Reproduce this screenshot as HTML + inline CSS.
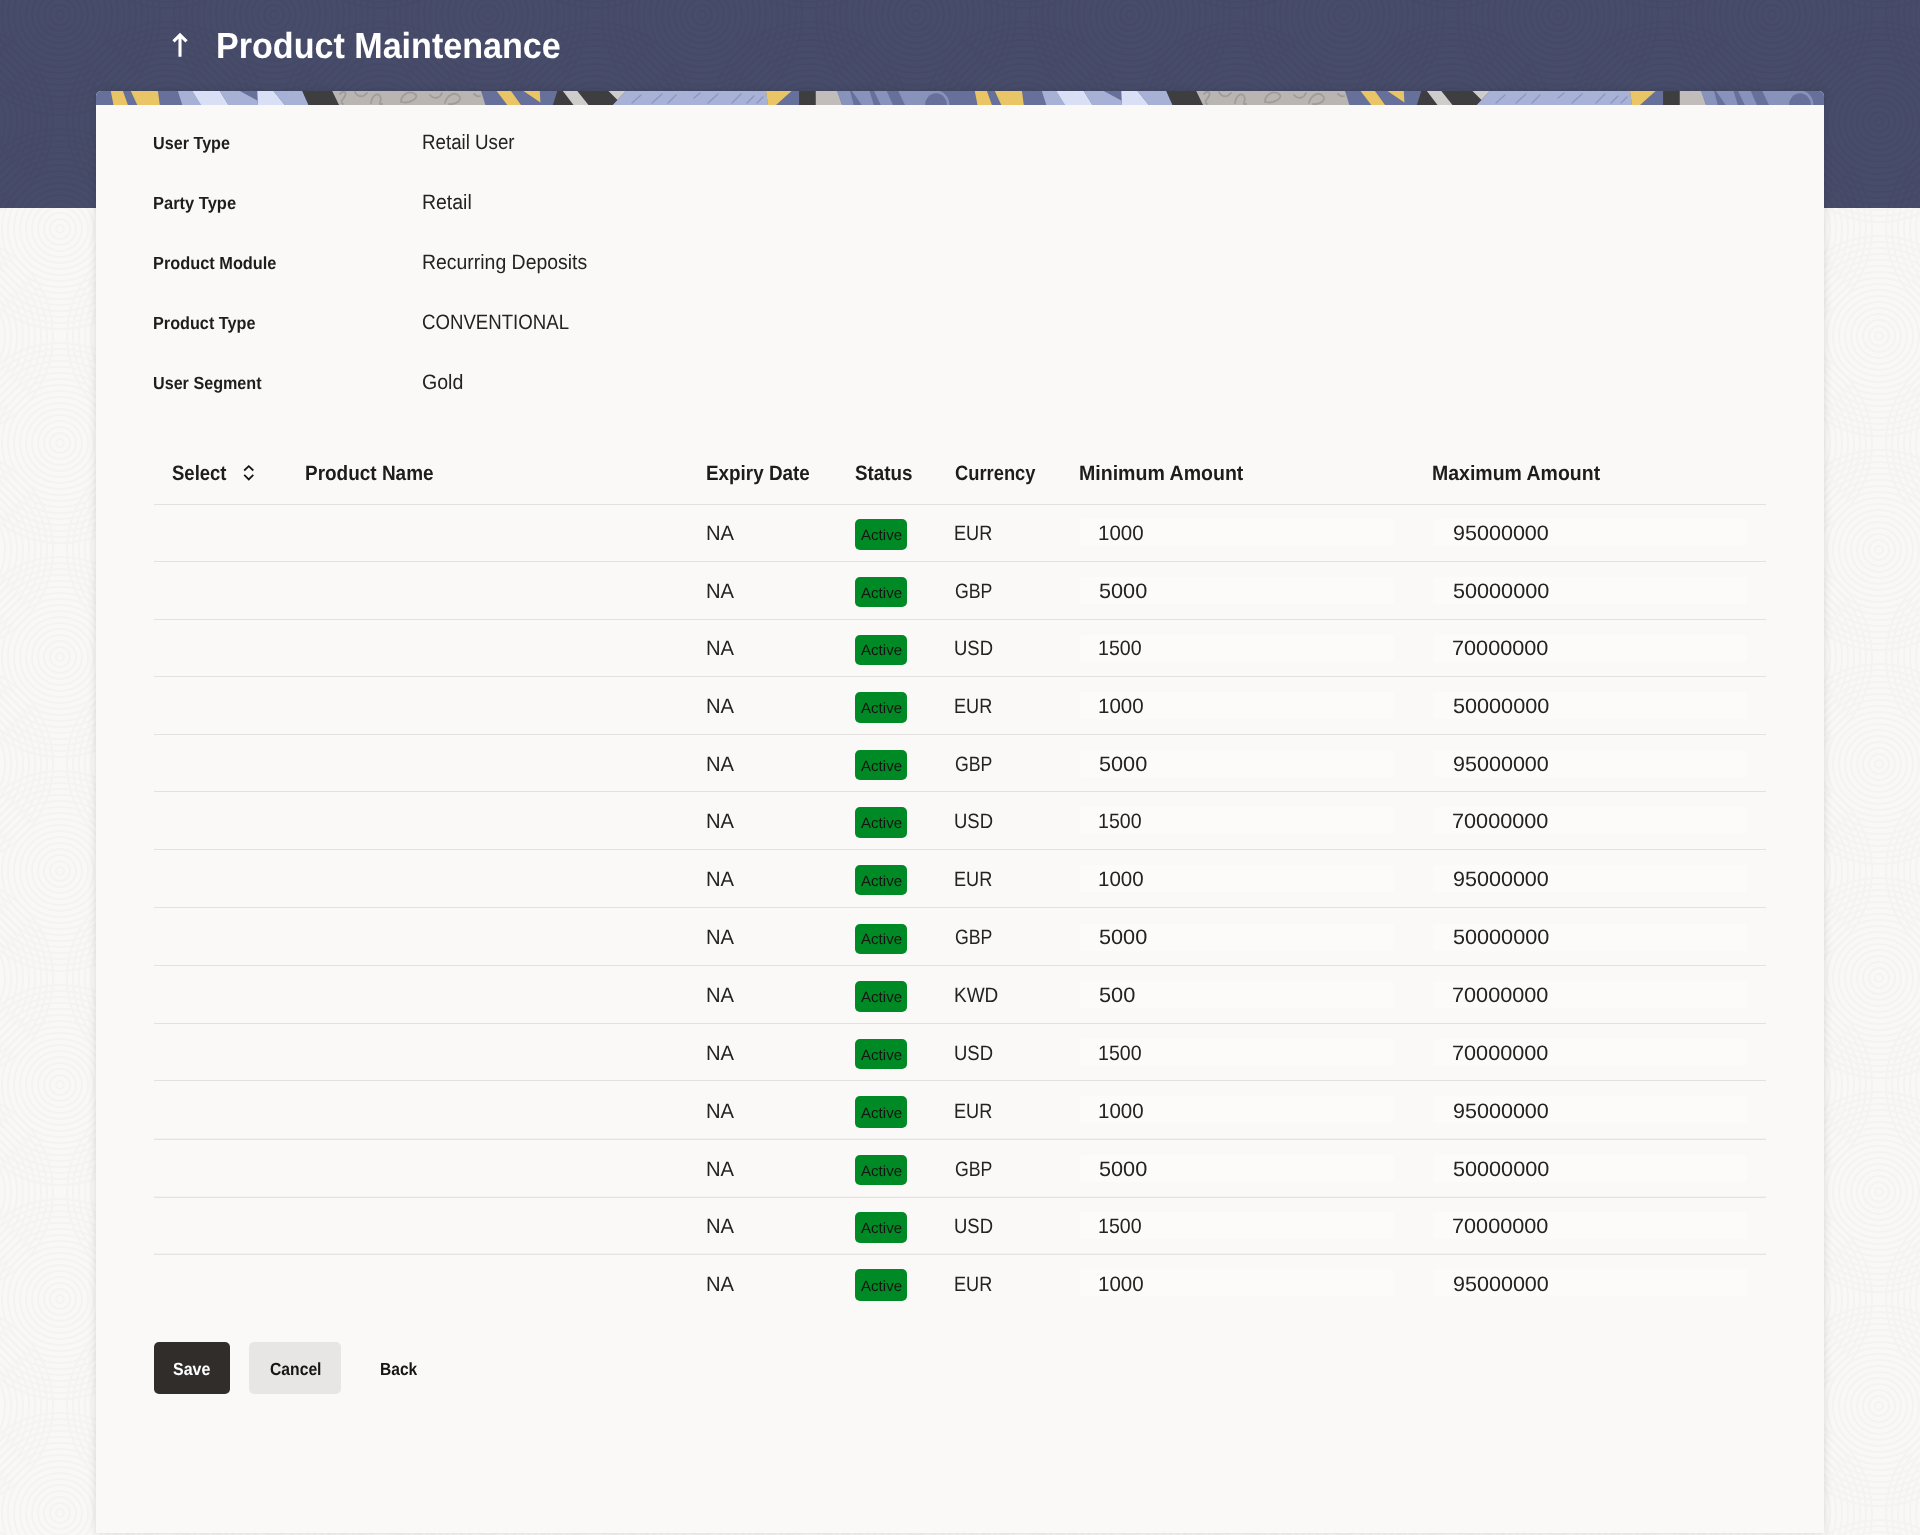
<!DOCTYPE html>
<html lang="en">
<head>
<meta charset="utf-8">
<title>Product Maintenance</title>
<style>
*{box-sizing:border-box;margin:0;padding:0}
html,body{width:1920px;height:1535px;overflow:hidden}
body{position:relative;background:#f9f8f7;font-family:"Liberation Sans",sans-serif;color:#161513}
.hdr{position:absolute;left:0;top:0;width:1920px;height:208px;background:#474c6a;overflow:hidden}
.hdr,.card{will-change:transform}
.arrow{position:absolute;left:170px;top:32px}
.card{position:absolute;left:96px;top:91px;width:1728px;height:1442px;background:#faf9f7;border-radius:5px 5px 0 0;box-shadow:0 0 8px rgba(0,0,0,.13);overflow:hidden}
.strip{position:absolute;left:0;top:0;width:1728px;height:14px;display:block}
.t{text-rendering:geometricPrecision;position:absolute;display:block;white-space:nowrap;line-height:1;transform-origin:0 0}
.title,.w{color:#fff}
.sort{position:absolute}
.ln{position:absolute;left:58px;width:1612px;height:1px;background:#e4e2df}
.ln2{position:absolute;left:58px;width:1612px;height:2px;background:linear-gradient(#f2f1ef 0,#f2f1ef 1px,#e6e4e2 1px,#e6e4e2 2px)}
.badge{position:absolute;left:759px;width:52px;height:31px;border-radius:5px;background:#008a26}
.box{position:absolute;width:314px;height:27px;border-radius:4px;background:#fcfbfa}
.mn{left:984px}
.mx{left:1337px}
.btn{position:absolute;top:1251px;height:52px;border-radius:5px}
.save{left:58px;width:76px;background:#312d2a}
.cancel{left:153px;width:92px;background:#e8e6e4}
.tex{position:absolute;left:0;top:0;display:block}
.val,.td{color:#242321}
.lbl,.th{color:#1e1d1b}
.title{font-size:36.3px;font-weight:bold}
.lbl{font-size:17.6px;font-weight:bold}
.val{font-size:20.8px;font-weight:normal}
.th{font-size:20.8px;font-weight:bold}
.td{font-size:20.8px;font-weight:normal}
.bg{font-size:15.0px;font-weight:normal}
.bt{font-size:17.6px;font-weight:bold}
</style>
</head>
<body>
<div class="hdr">
  <svg class="tex" width="1920" height="208" viewBox="0 0 1920 208"><defs><pattern id="fp" width="214" height="214" patternUnits="userSpaceOnUse" patternTransform="translate(-47 122)"><g fill="none" stroke="#000" stroke-width="2"><circle cx="107" cy="107" r="4"/><circle cx="107" cy="107" r="10"/><circle cx="107" cy="107" r="16"/><circle cx="107" cy="107" r="22"/><circle cx="107" cy="107" r="28"/><circle cx="107" cy="107" r="34"/><circle cx="107" cy="107" r="40"/><circle cx="107" cy="107" r="46"/><circle cx="107" cy="107" r="52"/><circle cx="107" cy="107" r="58"/><circle cx="107" cy="107" r="64"/><circle cx="107" cy="107" r="70"/><circle cx="107" cy="107" r="76"/><circle cx="107" cy="107" r="82"/><circle cx="107" cy="107" r="88"/><circle cx="107" cy="107" r="94"/><circle cx="107" cy="107" r="100"/><circle cx="0" cy="0" r="4"/><circle cx="0" cy="0" r="10"/><circle cx="0" cy="0" r="16"/><circle cx="0" cy="0" r="22"/><circle cx="0" cy="0" r="28"/><circle cx="0" cy="0" r="34"/><circle cx="0" cy="0" r="40"/><circle cx="0" cy="0" r="46"/><circle cx="0" cy="0" r="52"/><circle cx="0" cy="0" r="58"/><circle cx="0" cy="0" r="64"/><circle cx="0" cy="0" r="70"/><circle cx="0" cy="0" r="76"/><circle cx="0" cy="0" r="82"/><circle cx="0" cy="0" r="88"/><circle cx="0" cy="0" r="94"/><circle cx="0" cy="0" r="100"/><circle cx="214" cy="0" r="4"/><circle cx="214" cy="0" r="10"/><circle cx="214" cy="0" r="16"/><circle cx="214" cy="0" r="22"/><circle cx="214" cy="0" r="28"/><circle cx="214" cy="0" r="34"/><circle cx="214" cy="0" r="40"/><circle cx="214" cy="0" r="46"/><circle cx="214" cy="0" r="52"/><circle cx="214" cy="0" r="58"/><circle cx="214" cy="0" r="64"/><circle cx="214" cy="0" r="70"/><circle cx="214" cy="0" r="76"/><circle cx="214" cy="0" r="82"/><circle cx="214" cy="0" r="88"/><circle cx="214" cy="0" r="94"/><circle cx="214" cy="0" r="100"/><circle cx="0" cy="214" r="4"/><circle cx="0" cy="214" r="10"/><circle cx="0" cy="214" r="16"/><circle cx="0" cy="214" r="22"/><circle cx="0" cy="214" r="28"/><circle cx="0" cy="214" r="34"/><circle cx="0" cy="214" r="40"/><circle cx="0" cy="214" r="46"/><circle cx="0" cy="214" r="52"/><circle cx="0" cy="214" r="58"/><circle cx="0" cy="214" r="64"/><circle cx="0" cy="214" r="70"/><circle cx="0" cy="214" r="76"/><circle cx="0" cy="214" r="82"/><circle cx="0" cy="214" r="88"/><circle cx="0" cy="214" r="94"/><circle cx="0" cy="214" r="100"/><circle cx="214" cy="214" r="4"/><circle cx="214" cy="214" r="10"/><circle cx="214" cy="214" r="16"/><circle cx="214" cy="214" r="22"/><circle cx="214" cy="214" r="28"/><circle cx="214" cy="214" r="34"/><circle cx="214" cy="214" r="40"/><circle cx="214" cy="214" r="46"/><circle cx="214" cy="214" r="52"/><circle cx="214" cy="214" r="58"/><circle cx="214" cy="214" r="64"/><circle cx="214" cy="214" r="70"/><circle cx="214" cy="214" r="76"/><circle cx="214" cy="214" r="82"/><circle cx="214" cy="214" r="88"/><circle cx="214" cy="214" r="94"/><circle cx="214" cy="214" r="100"/></g></pattern></defs><rect width="1920" height="208" fill="url(#fp)" opacity=".035"/></svg>
  <svg class="arrow" width="20" height="28" viewBox="0 0 20 28"><path d="M10 24.8V2.4M3.5 9.4 10 2.9l6.5 6.5" fill="none" stroke="#fff" stroke-width="3.1"/></svg>
  <span class="t title" style="left:216.37px;top:28.15px;transform:scaleX(0.9391)">Product Maintenance</span>
</div>
<svg class="tex" style="top:208px" width="1920" height="1327" viewBox="0 208 1920 1327"><rect y="208" width="1920" height="1327" fill="url(#fp)" opacity=".02"/></svg>
<div class="card">
  <svg class="strip" width="1728" height="14" viewBox="0 0 1728 14">
    <defs>
      <g id="tile">
        <rect x="0" y="0" width="864" height="14" fill="#66709a"/>
        <polygon points="14.8,0 26.9,0 31.9,14 17.5,14" fill="#e9c566"/>
        <polygon points="34.8,0 61.9,0 63.8,14 41.3,14" fill="#e9c566"/>
        <polygon points="81.9,0 96.3,0 105,14 86.3,14" fill="#a6b1d5"/>
        <polygon points="96.3,0 123.8,0 132.5,14 105,14" fill="#d9dff5"/>
        <polygon points="123.8,0 143.8,0 161.3,9.5 161.9,14 132.5,14" fill="#a6b1d5"/>
        <polygon points="161.3,0 177.5,0 188.8,14 161.9,14" fill="#d9dff5"/>
        <polygon points="177.5,0 206.3,0 212.5,14 188.8,14" fill="#a6b1d5"/>
        <polygon points="206.3,0 236.3,0 243.1,14 212.5,14" fill="#3e3e40"/>
        <polygon points="236.3,0 385,0 389.4,14 243.1,14" fill="#b9b5b2"/>
        <path d="M244,3c3,-4 7,-2 5,2s-6,6 -2,8M259,1c2,5 8,6 12,1M275,12c1,-7 6,-11 9,-7s-3,9 2,8M305,11c0,-8 9,-12 14,-8s-6,10 -13,8M334,4c4,5 10,3 12,-2M349,12c2,-8 10,-12 14,-7s-5,9 -10,8M378,3c2,2 4,3 6,2" fill="none" stroke="#a09c99" stroke-width="1.8" stroke-linecap="round"/>
        <polygon points="400.6,0 415,0 425,14 411.3,14" fill="#e9c566"/>
        <polygon points="427.5,0 443.8,0 444.4,11.5" fill="#e9c566"/>
        <polygon points="461.3,0 530,0 516.9,14 456.9,14" fill="#3e3e40"/>
        <polygon points="466.9,0 481.3,0 492.5,14 477.5,14" fill="#cfcdcb"/>
        <polygon points="512.5,0 526.3,0 530,0 521.5,9 " fill="#cfcdcb"/>
        <polygon points="530,0 670,0 672,14 516.9,14" fill="#a7b2d6"/>
        <path d="M545,4l-9,8M566,3l-10,9M580,4l-8,8M604,2l-6,5M622,3l-10,9M645,3l-9,9M658,5l-7,7M667,6l-6,6" stroke="#8c98c2" stroke-width="1.5" stroke-linecap="round"/>
        <polygon points="670,0 695.6,0 680,14 672,14" fill="#e9c566"/>
        <rect x="703.1" y="0" width="16.7" height="14" fill="#3e3e40"/>
        <polygon points="719.8,0 741.2,0 746,14 719.8,14" fill="#c1bdba"/>
        <polygon points="741.2,0 754,0 757.8,14 746,14" fill="#8893bb"/>
        <polygon points="756,0 773.6,0 777.8,14 765.7,14" fill="#8893bb"/>
        <polygon points="778,0 790.7,0 797,14 784.8,14" fill="#8893bb"/>
        <polygon points="802.3,0 840,0 840,14 809,14" fill="#8893bb"/>
        <ellipse cx="840" cy="14" rx="13.5" ry="14.6" fill="#8893bb"/>
        <ellipse cx="840" cy="14.5" rx="11" ry="12.3" fill="#66709a"/>
      </g>
    </defs>
    <use href="#tile"/>
    <use href="#tile" x="864"/>
  </svg>

  <span class="t lbl" style="left:57.28px;top:44.04px;transform:scaleX(0.9191)">User Type</span><span class="t val" style="left:326.37px;top:42.32px;transform:scaleX(0.9001)">Retail User</span>
  <span class="t lbl" style="left:56.50px;top:104.04px;transform:scaleX(0.9376)">Party Type</span><span class="t val" style="left:326.21px;top:102.32px;transform:scaleX(0.9351)">Retail</span>
  <span class="t lbl" style="left:56.54px;top:164.04px;transform:scaleX(0.9288)">Product Module</span><span class="t val" style="left:326.23px;top:162.32px;transform:scaleX(0.9342)">Recurring Deposits</span>
  <span class="t lbl" style="left:56.60px;top:224.04px;transform:scaleX(0.9223)">Product Type</span><span class="t val" style="left:325.79px;top:222.32px;transform:scaleX(0.8959)">CONVENTIONAL</span>
  <span class="t lbl" style="left:57.30px;top:284.04px;transform:scaleX(0.9176)">User Segment</span><span class="t val" style="left:325.79px;top:282.32px;transform:scaleX(0.9414)">Gold</span>
  <!-- table header -->
  <span class="t th" style="left:76.42px;top:373.32px;transform:scaleX(0.8897)">Select</span>
  <span class="t th" style="left:209.26px;top:373.32px;transform:scaleX(0.9120)">Product Name</span>
  <span class="t th" style="left:609.67px;top:373.32px;transform:scaleX(0.9076)">Expiry Date</span>
  <span class="t th" style="left:759.42px;top:373.32px;transform:scaleX(0.9053)">Status</span>
  <span class="t th" style="left:858.85px;top:373.32px;transform:scaleX(0.8812)">Currency</span>
  <span class="t th" style="left:983.39px;top:373.32px;transform:scaleX(0.9401)">Minimum Amount</span>
  <span class="t th" style="left:1335.54px;top:373.32px;transform:scaleX(0.9368)">Maximum Amount</span>
  <svg class="sort" style="left:145px;top:372px" width="16" height="20" viewBox="0 0 16 20"><path d="M3.2 7.5 7.75 3.1 12.3 7.5M3.2 11.8l4.55 4.6L12.3 11.8" fill="none" stroke="#161513" stroke-width="1.75"/></svg>
  <!-- table rows -->
  <div class="ln" style="top:413px"></div><div class="badge" style="top:428px;height:31px"></div><div class="box mn" style="top:428px"></div><div class="box mx" style="top:428px"></div><span class="t td" style="left:609.66px;top:433.32px;transform:scaleX(0.9717)">NA</span><span class="t bg" style="left:765.48px;top:437.25px;transform:scaleX(1.0050)">Active</span><span class="t td" style="left:857.65px;top:433.32px;transform:scaleX(0.8707)">EUR</span><span class="t td" style="left:1001.90px;top:433.32px;transform:scaleX(0.9850)">1000</span><span class="t td" style="left:1357.45px;top:433.32px;transform:scaleX(1.0357)">95000000</span>
  <div class="ln" style="top:470px"></div><div class="badge" style="top:486px;height:30px"></div><div class="box mn" style="top:486px"></div><div class="box mx" style="top:486px"></div><span class="t td" style="left:609.66px;top:491.32px;transform:scaleX(0.9717)">NA</span><span class="t bg" style="left:765.48px;top:495.25px;transform:scaleX(1.0050)">Active</span><span class="t td" style="left:858.74px;top:491.32px;transform:scaleX(0.8515)">GBP</span><span class="t td" style="left:1003.03px;top:491.32px;transform:scaleX(1.0427)">5000</span><span class="t td" style="left:1356.70px;top:491.32px;transform:scaleX(1.0398)">50000000</span>
  <div class="ln" style="top:528px"></div><div class="badge" style="top:544px;height:30px"></div><div class="box mn" style="top:544px"></div><div class="box mx" style="top:544px"></div><span class="t td" style="left:609.66px;top:548.32px;transform:scaleX(0.9717)">NA</span><span class="t bg" style="left:765.48px;top:552.25px;transform:scaleX(1.0050)">Active</span><span class="t td" style="left:858.04px;top:548.32px;transform:scaleX(0.8873)">USD</span><span class="t td" style="left:1002.30px;top:548.32px;transform:scaleX(0.9412)">1500</span><span class="t td" style="left:1355.71px;top:548.32px;transform:scaleX(1.0412)">70000000</span>
  <div class="ln" style="top:585px"></div><div class="badge" style="top:601px;height:31px"></div><div class="box mn" style="top:601px"></div><div class="box mx" style="top:601px"></div><span class="t td" style="left:609.66px;top:606.32px;transform:scaleX(0.9717)">NA</span><span class="t bg" style="left:765.48px;top:610.25px;transform:scaleX(1.0050)">Active</span><span class="t td" style="left:857.65px;top:606.32px;transform:scaleX(0.8707)">EUR</span><span class="t td" style="left:1001.90px;top:606.32px;transform:scaleX(0.9850)">1000</span><span class="t td" style="left:1356.70px;top:606.32px;transform:scaleX(1.0398)">50000000</span>
  <div class="ln" style="top:643px"></div><div class="badge" style="top:659px;height:30px"></div><div class="box mn" style="top:659px"></div><div class="box mx" style="top:659px"></div><span class="t td" style="left:609.66px;top:664.32px;transform:scaleX(0.9717)">NA</span><span class="t bg" style="left:765.48px;top:668.25px;transform:scaleX(1.0050)">Active</span><span class="t td" style="left:858.74px;top:664.32px;transform:scaleX(0.8515)">GBP</span><span class="t td" style="left:1003.03px;top:664.32px;transform:scaleX(1.0427)">5000</span><span class="t td" style="left:1357.45px;top:664.32px;transform:scaleX(1.0357)">95000000</span>
  <div class="ln" style="top:700px"></div><div class="badge" style="top:716px;height:31px"></div><div class="box mn" style="top:716px"></div><div class="box mx" style="top:716px"></div><span class="t td" style="left:609.66px;top:721.32px;transform:scaleX(0.9717)">NA</span><span class="t bg" style="left:765.48px;top:725.25px;transform:scaleX(1.0050)">Active</span><span class="t td" style="left:858.04px;top:721.32px;transform:scaleX(0.8873)">USD</span><span class="t td" style="left:1002.30px;top:721.32px;transform:scaleX(0.9412)">1500</span><span class="t td" style="left:1355.71px;top:721.32px;transform:scaleX(1.0412)">70000000</span>
  <div class="ln" style="top:758px"></div><div class="badge" style="top:774px;height:30px"></div><div class="box mn" style="top:774px"></div><div class="box mx" style="top:774px"></div><span class="t td" style="left:609.66px;top:779.32px;transform:scaleX(0.9717)">NA</span><span class="t bg" style="left:765.48px;top:783.25px;transform:scaleX(1.0050)">Active</span><span class="t td" style="left:857.65px;top:779.32px;transform:scaleX(0.8707)">EUR</span><span class="t td" style="left:1001.90px;top:779.32px;transform:scaleX(0.9850)">1000</span><span class="t td" style="left:1357.45px;top:779.32px;transform:scaleX(1.0357)">95000000</span>
  <div class="ln" style="top:816px"></div><div class="badge" style="top:833px;height:30px"></div><div class="box mn" style="top:833px"></div><div class="box mx" style="top:833px"></div><span class="t td" style="left:609.66px;top:837.32px;transform:scaleX(0.9717)">NA</span><span class="t bg" style="left:765.48px;top:841.25px;transform:scaleX(1.0050)">Active</span><span class="t td" style="left:858.74px;top:837.32px;transform:scaleX(0.8515)">GBP</span><span class="t td" style="left:1003.03px;top:837.32px;transform:scaleX(1.0427)">5000</span><span class="t td" style="left:1356.70px;top:837.32px;transform:scaleX(1.0398)">50000000</span>
  <div class="ln" style="top:874px"></div><div class="badge" style="top:890px;height:31px"></div><div class="box mn" style="top:890px"></div><div class="box mx" style="top:890px"></div><span class="t td" style="left:609.66px;top:895.32px;transform:scaleX(0.9717)">NA</span><span class="t bg" style="left:765.48px;top:899.25px;transform:scaleX(1.0050)">Active</span><span class="t td" style="left:858.25px;top:895.32px;transform:scaleX(0.9118)">KWD</span><span class="t td" style="left:1002.93px;top:895.32px;transform:scaleX(1.0476)">500</span><span class="t td" style="left:1355.71px;top:895.32px;transform:scaleX(1.0412)">70000000</span>
  <div class="ln" style="top:932px"></div><div class="badge" style="top:948px;height:30px"></div><div class="box mn" style="top:948px"></div><div class="box mx" style="top:948px"></div><span class="t td" style="left:609.66px;top:953.32px;transform:scaleX(0.9717)">NA</span><span class="t bg" style="left:765.48px;top:957.25px;transform:scaleX(1.0050)">Active</span><span class="t td" style="left:858.04px;top:953.32px;transform:scaleX(0.8873)">USD</span><span class="t td" style="left:1002.30px;top:953.32px;transform:scaleX(0.9412)">1500</span><span class="t td" style="left:1355.71px;top:953.32px;transform:scaleX(1.0412)">70000000</span>
  <div class="ln" style="top:989px"></div><div class="badge" style="top:1005px;height:32px"></div><div class="box mn" style="top:1005px"></div><div class="box mx" style="top:1005px"></div><span class="t td" style="left:609.66px;top:1011.32px;transform:scaleX(0.9717)">NA</span><span class="t bg" style="left:765.48px;top:1015.25px;transform:scaleX(1.0050)">Active</span><span class="t td" style="left:857.65px;top:1011.32px;transform:scaleX(0.8707)">EUR</span><span class="t td" style="left:1001.90px;top:1011.32px;transform:scaleX(0.9850)">1000</span><span class="t td" style="left:1357.45px;top:1011.32px;transform:scaleX(1.0357)">95000000</span>
  <div class="ln2" style="top:1047px"></div><div class="badge" style="top:1064px;height:30px"></div><div class="box mn" style="top:1064px"></div><div class="box mx" style="top:1064px"></div><span class="t td" style="left:609.66px;top:1069.32px;transform:scaleX(0.9717)">NA</span><span class="t bg" style="left:765.48px;top:1073.25px;transform:scaleX(1.0050)">Active</span><span class="t td" style="left:858.74px;top:1069.32px;transform:scaleX(0.8515)">GBP</span><span class="t td" style="left:1003.03px;top:1069.32px;transform:scaleX(1.0427)">5000</span><span class="t td" style="left:1356.70px;top:1069.32px;transform:scaleX(1.0398)">50000000</span>
  <div class="ln2" style="top:1105px"></div><div class="badge" style="top:1121px;height:31px"></div><div class="box mn" style="top:1121px"></div><div class="box mx" style="top:1121px"></div><span class="t td" style="left:609.66px;top:1126.32px;transform:scaleX(0.9717)">NA</span><span class="t bg" style="left:765.48px;top:1130.25px;transform:scaleX(1.0050)">Active</span><span class="t td" style="left:858.04px;top:1126.32px;transform:scaleX(0.8873)">USD</span><span class="t td" style="left:1002.30px;top:1126.32px;transform:scaleX(0.9412)">1500</span><span class="t td" style="left:1355.71px;top:1126.32px;transform:scaleX(1.0412)">70000000</span>
  <div class="ln2" style="top:1162px"></div><div class="badge" style="top:1178px;height:32px"></div><div class="box mn" style="top:1178px"></div><div class="box mx" style="top:1178px"></div><span class="t td" style="left:609.66px;top:1184.32px;transform:scaleX(0.9717)">NA</span><span class="t bg" style="left:765.48px;top:1188.25px;transform:scaleX(1.0050)">Active</span><span class="t td" style="left:857.65px;top:1184.32px;transform:scaleX(0.8707)">EUR</span><span class="t td" style="left:1001.90px;top:1184.32px;transform:scaleX(0.9850)">1000</span><span class="t td" style="left:1357.45px;top:1184.32px;transform:scaleX(1.0357)">95000000</span>
  <!-- buttons -->
  <div class="btn save"></div><div class="btn cancel"></div>
  <span class="t bt w" style="left:76.88px;top:1270.04px;transform:scaleX(0.9090)">Save</span><span class="t bt" style="left:174.39px;top:1270.04px;transform:scaleX(0.8921)">Cancel</span><span class="t bt" style="left:284.16px;top:1270.04px;transform:scaleX(0.8853)">Back</span>
</div>
</body>
</html>
